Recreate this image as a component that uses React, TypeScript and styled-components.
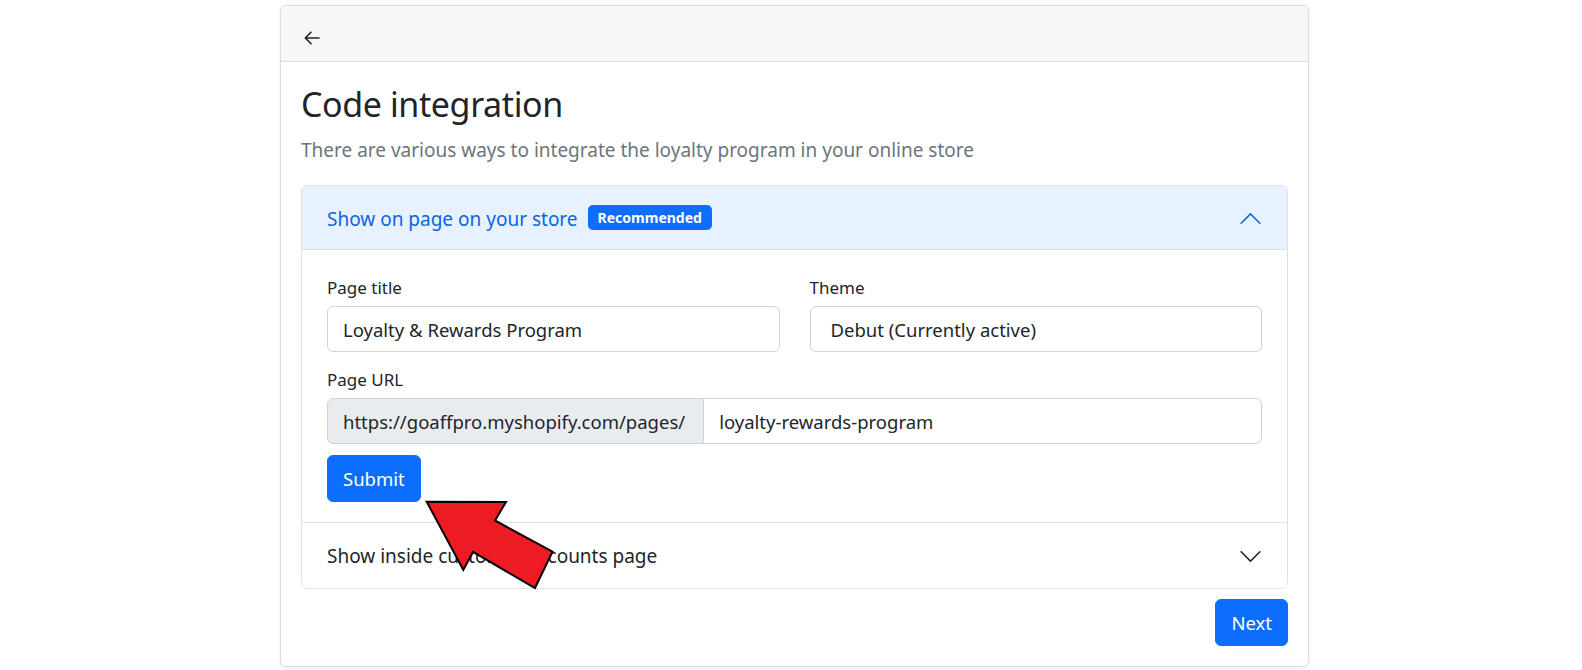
import React from "react";
import styled, { createGlobalStyle } from "styled-components";

const GlobalStyle = createGlobalStyle`
  html, body { margin: 0; padding: 0; background: #fff; }
  body { font-family: "Noto Sans", "Open Sans", sans-serif; color: #212529; }
  * { box-sizing: border-box; }
`;

const Page = styled.div`
  position: relative;
  padding: 5px 0 0 280px;
  height: 670px;
`;

const Card = styled.div`
  width: 1029px;
  border: 1px solid #dcdcdc;
  border-radius: 6px;
  box-shadow: 0 1px 4px rgba(0, 0, 0, 0.08);
  background: #fff;
  overflow: hidden;
`;

const CardHeader = styled.div`
  height: 56px;
  background: #f7f7f7;
  border-bottom: 1px solid #dcdcdc;
  display: flex;
  align-items: center;
  padding: 9px 0 0 22px;
`;

const BackButton = styled.button`
  border: 0;
  background: transparent;
  padding: 0;
  width: 18px;
  height: 18px;
  display: flex;
  align-items: center;
  justify-content: center;
  color: #212529;
  cursor: pointer;
`;

const CardBody = styled.div`
  padding: 22px 20px 20px;
  display: flex;
  flex-direction: column;
`;

const Title = styled.h2`
  margin: 0;
  font-size: 34px;
  letter-spacing: -0.4px;
  line-height: 40px;
  font-weight: 400;
  color: #212529;
`;

const Subtitle = styled.p`
  margin: 12px 0 21px;
  font-size: 19px;
  line-height: 28px;
  color: #6c757d;
`;

const Accordion = styled.div`
  border: 1px solid #dee2e6;
  border-radius: 6px;
  overflow: hidden;
`;

const Item = styled.div<{ $first?: boolean }>`
  border-top: ${(p) => (p.$first ? "0" : "1px solid #dee2e6")};
`;

const ItemHeader = styled.div<{ $open?: boolean }>`
  height: ${(p) => (p.$open ? "64px" : "65px")};
  display: flex;
  align-items: center;
  gap: 10px;
  padding: ${(p) => (p.$open ? "2px 24px 0 25px" : "1px 24px 0 25px")};
  background: ${(p) => (p.$open ? "#e7f1ff" : "#fff")};
  color: ${(p) => (p.$open ? "#0c63e4" : "#212529")};
  border-bottom: ${(p) => (p.$open ? "1px solid #dee2e6" : "0")};
  font-size: 19px;
  line-height: 28px;
`;

const Badge = styled.span`
  background: #0d6efd;
  color: #fff;
  font-weight: 700;
  font-size: 14px;
  line-height: 25px;
  height: 25px;
  padding: 0 10px;
  border-radius: 5px;
  margin-top: -3px;
`;

const Chevron = styled.svg<{ $up?: boolean }>`
  margin-left: auto;
  width: 25px;
  height: 25px;
  flex: none;
  transform: ${(p) => (p.$up ? "rotate(180deg)" : "none")};
`;

const ItemBody = styled.div`
  padding: 26px 25px 20px;
  display: flex;
  flex-direction: column;
`;

const FieldRow = styled.div`
  display: grid;
  grid-template-columns: 1fr 1fr;
  column-gap: 30px;
  margin-bottom: 16px;
`;

const Field = styled.div`
  display: flex;
  flex-direction: column;
`;

const Label = styled.label`
  display: block;
  font-size: 17px;
  line-height: 24px;
  margin-bottom: 6px;
  color: #212529;
`;

const TextInput = styled.input`
  height: 46px;
  width: 100%;
  border: 1px solid #ced4da;
  border-radius: 6px;
  padding: 0 15px;
  font-family: inherit;
  font-size: 18.5px;
  color: #212529;
  background: #fff;
  outline: none;
`;

const Select = styled.select`
  height: 46px;
  width: 100%;
  border: 1px solid #ced4da;
  border-radius: 6px;
  padding: 0 20px;
  font-family: inherit;
  font-size: 18.5px;
  color: #212529;
  background: #fff;
  appearance: none;
  outline: none;
`;

const InputGroup = styled.div`
  display: flex;
  height: 46px;
`;

const Addon = styled.span`
  display: flex;
  align-items: center;
  padding: 0 18px 0 15px;
  background: #e9ecef;
  border: 1px solid #ced4da;
  border-radius: 6px 0 0 6px;
  font-size: 18.5px;
  color: #212529;
  white-space: nowrap;
`;

const GroupInput = styled(TextInput)`
  flex: 1;
  margin-left: -1px;
  border-radius: 0 6px 6px 0;
`;

const PrimaryButton = styled.button`
  height: 47px;
  padding: 0 15px;
  background: #0d6efd;
  color: #fff;
  border: 1px solid #0d6efd;
  border-radius: 6px;
  font-family: inherit;
  font-size: 18.5px;
  cursor: pointer;
`;

const SubmitRow = styled.div`
  margin-top: 11px;
  display: flex;
`;

const Footer = styled.div`
  margin-top: 10px;
  display: flex;
  justify-content: flex-end;
`;

const Pointer = styled.svg`
  position: absolute;
  left: 420px;
  top: 495px;
  width: 140px;
  height: 100px;
  pointer-events: none;
`;

const chevronPath =
  "M1.646 4.646a.5.5 0 0 1 .708 0L8 10.293l5.646-5.647a.5.5 0 0 1 .708.708l-6 6a.5.5 0 0 1-.708 0l-6-6a.5.5 0 0 1 0-.708z";

export default function App() {
  return (
    <>
      <GlobalStyle />
      <Page>
        <Card>
          <CardHeader>
            <BackButton aria-label="Back">
              <svg width="16" height="16" viewBox="0 0 16 16" fill="none" stroke="currentColor" strokeWidth="1.6" strokeLinecap="round" strokeLinejoin="round">
                <path d="M15 8H1.5M7 2.2L1.3 8L7 13.8" />
              </svg>
            </BackButton>
          </CardHeader>
          <CardBody>
            <Title>Code integration</Title>
            <Subtitle>There are various ways to integrate the loyalty program in your online store</Subtitle>
            <Accordion>
              <Item $first>
                <ItemHeader $open>
                  <span>Show on page on your store</span>
                  <Badge>Recommended</Badge>
                  <Chevron $up viewBox="0 0 16 16" fill="#0c63e4">
                    <path d={chevronPath} />
                  </Chevron>
                </ItemHeader>
                <ItemBody>
                  <FieldRow>
                    <Field>
                      <Label>Page title</Label>
                      <TextInput defaultValue="Loyalty & Rewards Program" />
                    </Field>
                    <Field>
                      <Label>Theme</Label>
                      <Select defaultValue="debut">
                        <option value="debut">Debut (Currently active)</option>
                      </Select>
                    </Field>
                  </FieldRow>
                  <Field>
                    <Label>Page URL</Label>
                    <InputGroup>
                      <Addon>https://goaffpro.myshopify.com/pages/</Addon>
                      <GroupInput defaultValue="loyalty-rewards-program" />
                    </InputGroup>
                  </Field>
                  <SubmitRow>
                    <PrimaryButton>Submit</PrimaryButton>
                  </SubmitRow>
                </ItemBody>
              </Item>
              <Item>
                <ItemHeader>
                  <span>Show inside customer accounts page</span>
                  <Chevron viewBox="0 0 16 16" fill="#212529">
                    <path d={chevronPath} />
                  </Chevron>
                </ItemHeader>
              </Item>
            </Accordion>
            <Footer>
              <PrimaryButton>Next</PrimaryButton>
            </Footer>
          </CardBody>
        </Card>
        <Pointer viewBox="420 495 140 100">
          <polygon
            points="426.7,501.7 506,502 495,520.5 552.5,551.7 535,588 473,552 463.3,570"
            fill="#ed1c24"
            stroke="#000"
            strokeWidth="2"
            strokeLinejoin="miter"
          />
        </Pointer>
      </Page>
    </>
  );
}
